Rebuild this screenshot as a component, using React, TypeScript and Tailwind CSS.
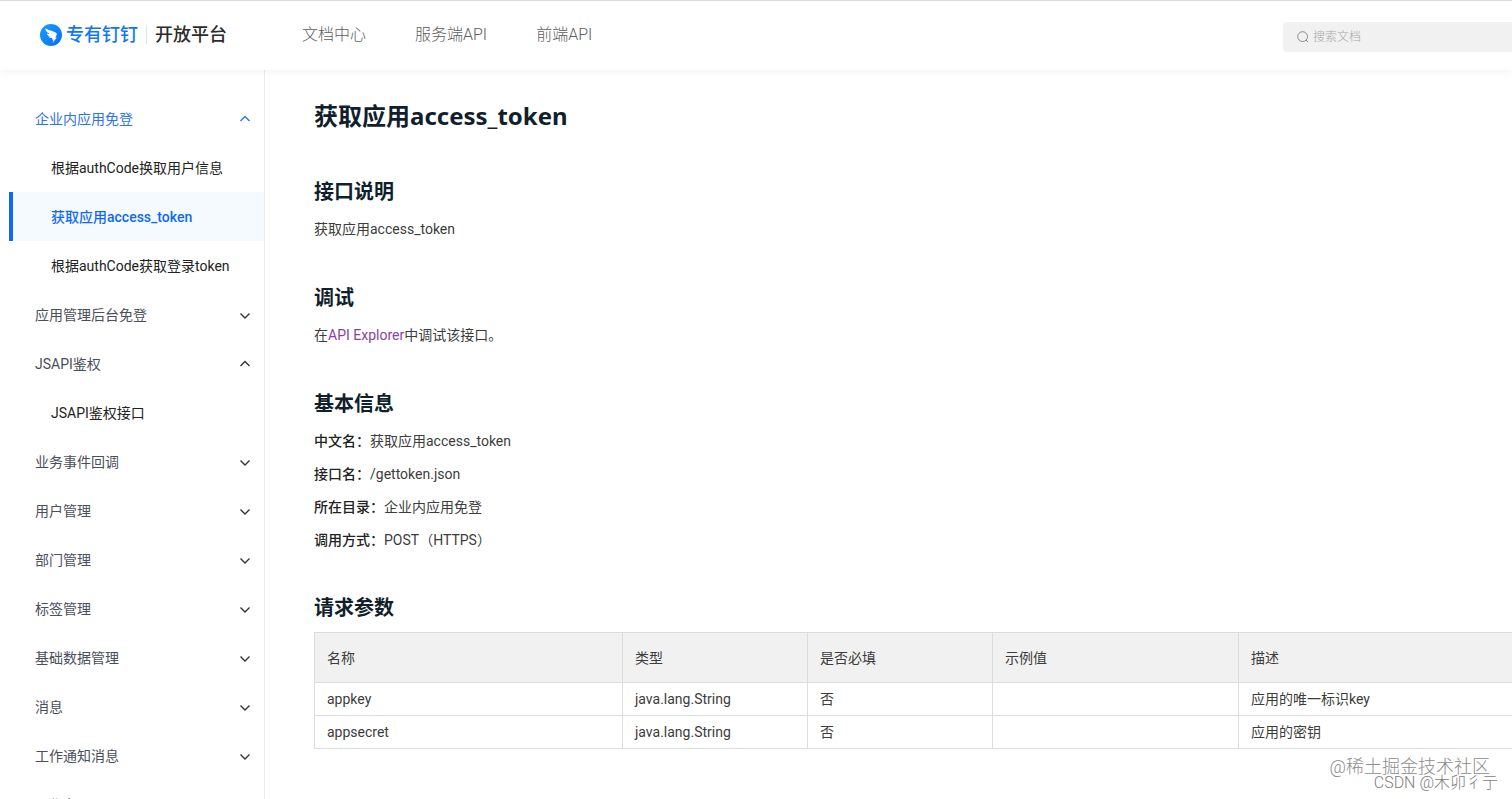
import { useState } from 'react';
import clsx from 'clsx';

interface MenuGroup {
  title: string;
  open?: boolean;
  children?: string[];
}

interface Param {
  name: string;
  type: string;
  required: string;
  example: string;
  description: string;
}

const NAV_LINKS = ['文档中心', '服务端API', '前端API'];

const MENU: MenuGroup[] = [
  {
    title: '企业内应用免登',
    open: true,
    children: ['根据authCode换取用户信息', '获取应用access_token', '根据authCode获取登录token'],
  },
  { title: '应用管理后台免登' },
  { title: 'JSAPI鉴权', open: true, children: ['JSAPI鉴权接口'] },
  { title: '业务事件回调' },
  { title: '用户管理' },
  { title: '部门管理' },
  { title: '标签管理' },
  { title: '基础数据管理' },
  { title: '消息' },
  { title: '工作通知消息' },
  { title: '工作台' },
];

const BASIC_INFO = [
  { label: '中文名：', value: '获取应用access_token' },
  { label: '接口名：', value: '/gettoken.json' },
  { label: '所在目录：', value: '企业内应用免登' },
  { label: '调用方式：', value: 'POST（HTTPS）' },
];

const PARAMS: Param[] = [
  { name: 'appkey', type: 'java.lang.String', required: '否', example: '', description: '应用的唯一标识key' },
  { name: 'appsecret', type: 'java.lang.String', required: '否', example: '', description: '应用的密钥' },
];

function Logo() {
  return (
    <a href="#" className="flex items-center">
      <svg viewBox="0 0 22 22" className="h-[22px] w-[22px]" aria-hidden="true">
        <defs>
          <linearGradient id="logo-fill" x1="0" y1="0" x2="1" y2="1">
            <stop offset="0" stopColor="#16a0ff" />
            <stop offset="1" stopColor="#0a6cf0" />
          </linearGradient>
        </defs>
        <circle cx="11" cy="11" r="11" fill="url(#logo-fill)" />
        <path
          d="M5.200 4.300C7.500 5.900 11 6.600 15 8.200c1.500.6 2 1.500 1.600 2.700-.3.900-.9 1.800-1.400 2.700h1.600l-4.100 5.200.8-3.400h-1.600l.5-1.500c-1.900.3-3.300-.2-4.200-1.400.9.1 1.900 0 2.500-.1-1.900-.4-3.500-1.300-4-3 1.100.4 2.200.6 3.100.6C7.500 8.900 5.500 7.300 5.200 4.300z"
          fill="#fff"
        />
      </svg>
      <span className="ml-1 text-lg font-medium text-[#0f76f5]">专有钉钉</span>
      <span className="ml-2 h-[18px] w-px bg-[#e4e4e4]" />
      <span className="ml-2 text-lg font-medium text-[#2b2b2b]">开放平台</span>
    </a>
  );
}

function Header() {
  return (
    <header className="relative z-10 flex h-[70px] shrink-0 items-center border-t border-[#dcdcdc] bg-white pb-[2px] pl-10 shadow-[0_2px_8px_rgba(0,0,0,0.05)]">
      <Logo />
      <nav className="ml-[75px] flex gap-[49px] text-base font-light text-[#5c5c5c]">
        {NAV_LINKS.map((link) => (
          <a key={link} href="#">
            {link}
          </a>
        ))}
      </nav>
      <label className="mt-1 ml-auto flex h-[30px] w-[229px] items-center gap-1 rounded-l bg-[#f1f1f2] pl-[14px]">
        <svg viewBox="0 0 12 12" className="h-3 w-3 text-[#8c8c8c]" fill="none" stroke="currentColor" aria-hidden="true">
          <circle cx="5.600" cy="5.600" r="4.900" />
          <path d="M9 9l2 2" />
        </svg>
        <input
          type="text"
          aria-label="搜索文档"
          placeholder="搜索文档"
          className="min-w-0 flex-1 bg-transparent text-xs font-light outline-none placeholder:text-[#a8a8a8]"
        />
      </label>
    </header>
  );
}

function Chevron({ up, className }: { up: boolean; className?: string }) {
  return (
    <svg
      viewBox="0 0 10 10"
      className={clsx('h-[10px] w-[10px]', className)}
      fill="none"
      stroke="currentColor"
      strokeWidth="1.400"
      aria-hidden="true"
    >
      <path d={up ? 'M.5 7L5 2.500 9.500 7' : 'M.5 3.500L5 8l4.500-4.500'} />
    </svg>
  );
}

function Sidebar() {
  const [active, setActive] = useState('获取应用access_token');
  const [opened, setOpened] = useState<string[]>(MENU.filter((g) => g.open).map((g) => g.title));

  const toggle = (title: string) => {
    setOpened((prev) => (prev.includes(title) ? prev.filter((t) => t !== title) : [...prev, title]));
  };

  return (
    <aside className="w-[265px] shrink-0 overflow-hidden border-r border-[#ececec] pt-6 pl-[9px] text-sm">
      {MENU.map((group) => {
        const isOpen = opened.includes(group.title);
        const isCurrent = group.children?.includes(active);
        return (
          <div key={group.title}>
            <button
              type="button"
              aria-expanded={isOpen}
              onClick={() => toggle(group.title)}
              className={clsx(
                'flex h-[49px] w-full items-center justify-between pr-[14px] pl-[26px]',
                isCurrent ? 'text-[#2a74ec]' : 'text-[#4a4e5a]'
              )}
            >
              {group.title}
              <Chevron up={isOpen} className={isCurrent ? 'text-[#2a74ec]' : 'text-[#333]'} />
            </button>
            {isOpen &&
              group.children?.map((item) => (
                <a
                  key={item}
                  href="#"
                  onClick={() => setActive(item)}
                  className={clsx(
                    'flex h-[49px] items-center border-l-4 pl-[38px]',
                    item === active
                      ? 'border-[#0f6af0] bg-[#f5faff] font-medium text-[#0f6af0]'
                      : 'border-transparent text-[#222]'
                  )}
                >
                  {item}
                </a>
              ))}
          </div>
        );
      })}
    </aside>
  );
}

function ParamTable({ params }: { params: Param[] }) {
  return (
    <table className="mt-2 w-full table-fixed border-collapse text-left">
      <colgroup>
        <col className="w-[308px]" />
        <col className="w-[185px]" />
        <col className="w-[185px]" />
        <col className="w-[246px]" />
        <col />
      </colgroup>
      <thead className="bg-[#f1f1f1]">
        <tr className="h-[50px]">
          {['名称', '类型', '是否必填', '示例值', '描述'].map((head) => (
            <th key={head} className="border border-r-0 border-[#dcdedd] px-3 font-normal">
              {head}
            </th>
          ))}
        </tr>
      </thead>
      <tbody>
        {params.map((param) => (
          <tr key={param.name} className="h-[33px]">
            <td className="border border-[#dcdedd] px-3">{param.name}</td>
            <td className="border border-[#dcdedd] px-3">{param.type}</td>
            <td className="border border-[#dcdedd] px-3">{param.required}</td>
            <td className="border border-[#dcdedd] px-3">{param.example}</td>
            <td className="border border-r-0 border-[#dcdedd] px-3">{param.description}</td>
          </tr>
        ))}
      </tbody>
    </table>
  );
}

export default function App() {
  return (
    <div className="relative flex h-screen flex-col overflow-hidden bg-white font-[Roboto,'Noto_Sans_CJK_SC',sans-serif]">
      <Header />
      <div className="flex min-h-0 flex-1">
        <Sidebar />
        <main className="min-w-0 flex-1 overflow-hidden pt-[30px] pl-[49px] text-sm leading-6 text-[#3c3c3c]">
          <h1 className="font-['Noto_Sans','Noto_Sans_CJK_SC',sans-serif] text-2xl leading-8 font-bold text-[#111f2c]">
            获取应用access_token
          </h1>

          <h2 className="mt-11 text-xl leading-8 font-bold text-[#111f2c]">接口说明</h2>
          <p className="mt-[9px]">获取应用access_token</p>

          <h2 className="mt-[41px] text-xl leading-8 font-bold text-[#111f2c]">调试</h2>
          <p className="mt-[9px]">
            在
            <a href="#" className="text-[#8a3fa8]">
              API Explorer
            </a>
            中调试该接口。
          </p>

          <h2 className="mt-[41px] text-xl leading-8 font-bold text-[#111f2c]">基本信息</h2>
          <div className="mt-[9px] flex flex-col gap-[9px]">
            {BASIC_INFO.map((info) => (
              <p key={info.label}>
                <strong className="font-medium text-[#222]">{info.label}</strong>
                {info.value}
              </p>
            ))}
          </div>

          <h2 className="mt-10 text-xl leading-8 font-bold text-[#111f2c]">请求参数</h2>
          <ParamTable params={PARAMS} />
        </main>
      </div>

      {/* watermarks over the page corner */}
      <div className="pointer-events-none absolute right-[22px] bottom-[22px] text-lg leading-5 font-light text-[#8c8c8c]">
        @稀土掘金技术社区
      </div>
      <div className="pointer-events-none absolute right-[14px] bottom-[6px] text-base leading-5 font-light text-[#808080]">
        CSDN @木卯彳亍
      </div>
    </div>
  );
}
